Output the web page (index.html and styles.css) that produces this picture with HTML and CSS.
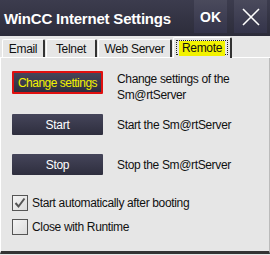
FILE: index.html
```html
<!DOCTYPE html>
<html lang="en">
<head>
    <meta charset="UTF-8">
    <title>WinCC Internet Settings</title>
    <link rel="stylesheet" href="styles.css">
</head>
<body>
<div class="window">
    <div class="titlebar">
        <div class="title">WinCC Internet Settings</div>
        <div class="tb-btn ok">OK</div>
        <div class="tb-btn close">
            <svg width="20" height="20" viewBox="0 0 20 20">
                <path d="M2 2 L18 18 M18 2 L2 18" stroke="#fff" stroke-width="1.6" fill="none"/>
            </svg>
        </div>
    </div>

    <div class="tabs">
        <div class="tab tab-email">Email</div>
        <div class="tab tab-telnet">Telnet</div>
        <div class="tab tab-web">Web Server</div>
        <div class="tab tab-remote active"><span class="focus"><span class="hl">Remote</span></span></div>
    </div>

    <div class="panel">
        <div class="row row-first">
            <div class="btn btn-marked"><span>Change settings</span></div>
            <div class="desc">Change settings of the<br>Sm@rtServer</div>
        </div>
        <div class="row">
            <div class="btn">Start</div>
            <div class="desc">Start the Sm@rtServer</div>
        </div>
        <div class="row">
            <div class="btn">Stop</div>
            <div class="desc">Stop the Sm@rtServer</div>
        </div>

        <div class="check-list">
            <label class="check">
                <span class="box">
                    <svg width="14" height="14" viewBox="0 0 14 14">
                        <path d="M2.5 7 L5.5 10.5 L11.5 2.5" stroke="#555" stroke-width="2" fill="none"/>
                    </svg>
                </span>
                Start automatically after booting
            </label>
            <label class="check">
                <span class="box"></span>
                Close with Runtime
            </label>
        </div>
    </div>
</div>
</body>
</html>
```

FILE: styles.css
```css
body {
    margin: 0;
    background: #2f2f3c;
    font-family: "Liberation Sans", Tahoma, sans-serif;
}

.window {
    width: 270px;
    height: 255px;
    display: flex;
    flex-direction: column;
    background: #e6e6e6;
    overflow: hidden;
}

.titlebar {
    height: 36px;
    flex: none;
    display: flex;
    align-items: stretch;
    background: linear-gradient(#3c3c4e, #2c2c3a);
    color: #fff;
}

.title {
    flex: 1;
    display: flex;
    align-items: center;
    padding-left: 4px;
    font-size: 15px;
    font-weight: bold;
    white-space: nowrap;
    letter-spacing: -0.2px;
}

.tb-btn {
    width: 33px;
    height: 33px;
    margin: 0 3px;
    display: flex;
    align-items: center;
    justify-content: center;
    background: linear-gradient(#4a4a5c, #34344a);
}

.ok {
    font-weight: bold;
    font-size: 14px;
    margin-right: 4px;
}

.close {
    margin-right: 3px;
}

.tabs {
    height: 21px;
    flex: none;
    display: flex;
    align-items: flex-end;
    padding-left: 2px;
    background: #e6e6e6;
    border-bottom: 1px solid #fff;
}

.tab {
    height: 18px;
    box-sizing: border-box;
    border: 1px solid #fff;
    border-right: 2px solid #333;
    border-bottom: none;
    border-radius: 2px 2px 0 0;
    font-size: 12px;
    letter-spacing: -0.3px;
    display: flex;
    align-items: center;
    justify-content: center;
    color: #111;
    background: #e6e6e6;
    white-space: nowrap;
}

.tab-email { width: 43px; }
.tab-telnet { width: 51px; margin-left: 1px; }
.tab-web { width: 74px; margin-left: 1px; }

.tab-remote {
    width: 59px;
    height: 21px;
    margin-left: 1px;
    margin-bottom: -1px;
    padding: 2px 2px 3px;
    align-items: stretch;
}

.focus {
    flex: 1;
    border: 1px dotted #222;
    display: flex;
    align-items: flex-start;
    justify-content: center;
}

.hl {
    background: #f2f200;
    padding: 0 3px;
    line-height: 15px;
}

.panel {
    flex: 1;
    padding: 13px 11px 0;
    border-left: 1px solid #fff;
    border-right: 1px solid #bbb;
    border-bottom: 3px solid #333;
    margin-bottom: 1px;
}

.row {
    display: flex;
    align-items: center;
    gap: 14px;
    height: 21px;
    margin-bottom: 19px;
}

.row-first {
    height: 32px;
    align-items: flex-start;
    margin-bottom: 11px;
}

.btn {
    width: 91px;
    height: 21px;
    flex: none;
    box-sizing: border-box;
    display: flex;
    align-items: center;
    justify-content: center;
    background: linear-gradient(#45455a, #2e2e3e);
    color: #fff;
    font-size: 12px;
    letter-spacing: -0.3px;
    white-space: nowrap;
    border-radius: 1px;
}

.btn-marked {
    border: 2px solid #e01010;
    height: 23px;
    color: #f2f200;
    letter-spacing: -0.5px;
}

.desc {
    font-size: 12px;
    letter-spacing: -0.35px;
    color: #111;
    line-height: 16px;
    white-space: nowrap;
}

.check-list {
    display: flex;
    flex-direction: column;
    gap: 8px;
    margin-top: 20px;
}

.check {
    display: flex;
    align-items: center;
    gap: 4px;
    font-size: 12px;
    letter-spacing: -0.35px;
    color: #111;
    white-space: nowrap;
}

.box {
    width: 16px;
    height: 16px;
    box-sizing: border-box;
    border: 1px solid #555;
    background: linear-gradient(135deg, #f4f4f4, #dcdcdc);
    display: flex;
    align-items: center;
    justify-content: center;
}
```
